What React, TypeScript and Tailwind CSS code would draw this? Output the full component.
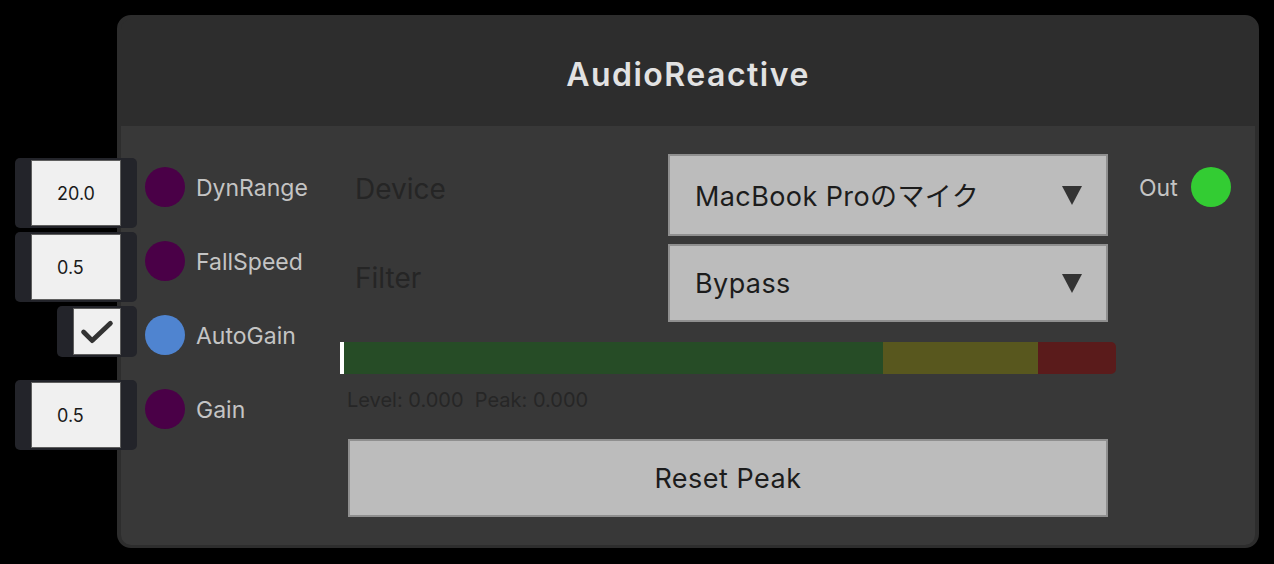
import React from "react";

const font = { fontFamily: "Inter, 'Noto Sans CJK JP', 'Noto Sans', sans-serif" };

function NumberPort({ value, label }: { value: string; label: string }) {
  return (
    <div className="flex h-[74px] items-center">
      <div className="flex w-[122px] justify-end">
        <div className="mt-[12px] flex h-[70px] w-[122px] items-center justify-center rounded-[5px] bg-[#23242a] px-[16px]">
          <div className="flex h-[66px] w-[90px] items-center border border-[#5e5e5e] bg-[#f0f0f0] pl-[25px] text-[18px] text-[#1a1a1a]">
            {value}
          </div>
        </div>
      </div>
      <div className="ml-[8px] h-[40px] w-[40px] shrink-0 rounded-full bg-[#4a0047]" />
      <div className="ml-[11px] pt-[2px] text-[23px] text-[#c4c4c4]">{label}</div>
    </div>
  );
}

function CheckPort({ label }: { label: string }) {
  return (
    <div className="flex h-[74px] items-center">
      <div className="flex w-[122px] justify-end">
        <div className="mb-[7px] flex h-[51px] w-[80px] items-center justify-center rounded-[5px] bg-[#23242a] px-[16px]">
          <div className="flex h-[47px] w-[48px] items-center justify-center border border-[#5e5e5e] bg-[#f0f0f0]">
            <svg width="48" height="47" viewBox="0 0 48 47">
              <polyline
                points="10,24 19,33 38,15"
                fill="none"
                stroke="#333333"
                strokeWidth="5"
                strokeLinecap="round"
                strokeLinejoin="round"
              />
            </svg>
          </div>
        </div>
      </div>
      <div className="ml-[8px] h-[40px] w-[40px] shrink-0 rounded-full bg-[#4f84d0]" />
      <div className="ml-[11px] pt-[2px] text-[23px] text-[#c4c4c4]">{label}</div>
    </div>
  );
}

function Arrow() {
  return (
    <svg width="20" height="19" viewBox="0 0 20 19">
      <polygon points="0,0 20,0 10,19" fill="#333333" />
    </svg>
  );
}

function Dropdown({ text, h, pt }: { text: string; h: string; pt: string }) {
  return (
    <div
      className={`flex ${h} w-[440px] items-center justify-between border-2 border-[#8f8f8f] bg-[#bcbcbc] pl-[25px] pr-[24px] text-[27px] tracking-[0.4px] text-[#1c1c1c]`}
    >
      <span className={pt}>{text}</span>
      <Arrow />
    </div>
  );
}

export default function App() {
  return (
    <div className="h-[564px] w-[1274px] bg-black pl-[117px] pt-[15px]" style={font}>
      <div className="flex h-[533px] w-[1142px] flex-col rounded-[14px] border-x-4 border-b-[3px] border-t-4 border-[#2d2d2d] bg-[#2d2d2d]">
        <div className="flex h-[107px] shrink-0 items-center justify-center pt-[4px] text-[32px] font-semibold tracking-[1.5px] text-[#e2e2e2]">
          AudioReactive
        </div>
        <div className="flex flex-1 rounded-b-[10px] bg-[#383838] pt-[24px]">
          <div className="ml-[-106px] w-[325px] shrink-0">
            <NumberPort value="20.0" label="DynRange" />
            <NumberPort value="0.5" label="FallSpeed" />
            <CheckPort label="AutoGain" />
            <NumberPort value="0.5" label="Gain" />
          </div>
          <div className="mt-[4px] w-[776px] shrink-0">
            <div className="flex h-[82px] items-center">
              <div className="mb-[12px] w-[328px] pl-[15px] text-[28px] text-[#252525]">Device</div>
              <Dropdown text="MacBook Proのマイク" h="h-[82px]" pt="pt-[4px]" />
            </div>
            <div className="mt-[8px] flex h-[78px] items-center">
              <div className="mb-[11px] w-[328px] pl-[15px] text-[28px] text-[#252525]">Filter</div>
              <Dropdown text="Bypass" h="h-[78px]" pt="pt-[2px]" />
            </div>
            <div className="mt-[20px] flex h-[32px] w-[776px] overflow-hidden rounded-r-[5px]">
              <div className="w-[4px] bg-white" />
              <div className="w-[539px] bg-[#264c26]" />
              <div className="w-[155px] bg-[#58571e]" />
              <div className="flex-1 bg-[#5a1b1b]" />
            </div>
            <div className="flex h-[50px] items-center whitespace-pre pl-[7px] pt-[1px] text-[20px] text-[#262626]">
              {"Level: 0.000  Peak: 0.000"}
            </div>
            <div className="ml-[8px] mt-[15px] flex h-[78px] w-[760px] items-center justify-center border-2 border-[#8f8f8f] bg-[#bcbcbc] pt-[3px] text-[27px] tracking-[0.5px] text-[#1c1c1c]">
              Reset Peak
            </div>
          </div>
          <div className="ml-[23px] flex h-[74px] w-[92px] items-center justify-between">
            <span className="pt-[2px] text-[23px] text-[#c4c4c4]">Out</span>
            <div className="h-[40px] w-[40px] rounded-full bg-[#33cc33]" />
          </div>
        </div>
      </div>
    </div>
  );
}
